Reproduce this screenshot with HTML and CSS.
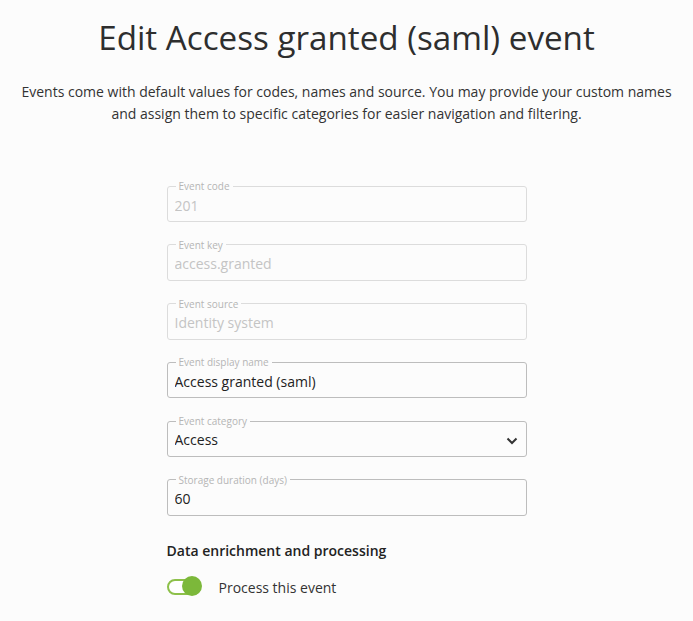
FILE: index.html
```html
<!DOCTYPE html>
<html lang="en">

<head>
    <meta charset="UTF-8">
    <meta name="viewport" content="width=device-width, initial-scale=1.0">
    <title>Edit event</title>
    <link rel="stylesheet" href="styles.css">
</head>

<body>
    <div class="page">
        <h1>Edit Access granted (saml) event</h1>
        <p class="intro">Events come with default values for codes, names and source. You may provide your custom names
            and assign them to specific categories for easier navigation and filtering.</p>

        <form class="event-form">
            <fieldset class="field disabled">
                <legend>Event code</legend>
                <input type="text" value="201" disabled />
            </fieldset>
            <fieldset class="field disabled">
                <legend>Event key</legend>
                <input type="text" value="access.granted" disabled />
            </fieldset>
            <fieldset class="field disabled">
                <legend>Event source</legend>
                <input type="text" value="Identity system" disabled />
            </fieldset>
            <fieldset class="field">
                <legend>Event display name</legend>
                <input type="text" value="Access granted (saml)" />
            </fieldset>
            <fieldset class="field select-field">
                <legend>Event category</legend>
                <select>
                    <option>Access</option>
                    <option>Authentication</option>
                    <option>Other</option>
                </select>
                <svg class="chevron" width="12" height="8" viewBox="0 0 12 8">
                    <path d="M1.5 1.5 L6 6 L10.5 1.5" fill="none" stroke="#333" stroke-width="2" />
                </svg>
            </fieldset>
            <fieldset class="field">
                <legend>Storage duration (days)</legend>
                <input type="text" value="60" />
            </fieldset>

            <div class="processing">
                <h3>Data enrichment and processing</h3>
                <label class="toggle-row">
                    <span class="toggle"><span class="knob"></span></span>
                    <span>Process this event</span>
                </label>
            </div>
        </form>
    </div>
</body>

</html>
```

FILE: styles.css
```css
/* General Styling */
body {
    font-family: "Open Sans", Arial, sans-serif;
    margin: 0;
    padding: 0;
    background: #fcfcfc;
    color: #333;
}

.page {
    display: flex;
    flex-direction: column;
    align-items: center;
    padding-top: 15px;
}

h1 {
    font-size: 33.2px;
    font-weight: 500;
    color: #2e2e2e;
    margin: 0;
    line-height: 46px;
}

.intro {
    width: 670px;
    text-align: center;
    font-size: 14px;
    line-height: 22px;
    color: #333;
    margin: 20px 0 0;
}

/* Form */
.event-form {
    width: 360px;
    display: flex;
    flex-direction: column;
    gap: 16.8px;
    margin-top: 55px;
}

.field {
    margin: 0;
    padding: 0 7px;
    border: 1px solid #bdbdbd;
    border-radius: 3px;
    position: relative;
}

.field legend {
    font-size: 10px;
    line-height: 12px;
    color: #b5b5b5;
    padding: 0 3px;
    margin-left: 1px;
}

.field input,
.field select {
    display: block;
    width: 100%;
    box-sizing: border-box;
    border: none;
    outline: none;
    background: transparent;
    font-family: inherit;
    font-size: 14px;
    line-height: 20px;
    height: 29px;
    padding: 3px 0 6px;
    color: #222;
}

.field select {
    appearance: none;
    -webkit-appearance: none;
    padding-left: 0;
}

.field.disabled {
    border-color: #dcdcdc;
}

.field.disabled input {
    color: #c4c4c4;
}

.chevron {
    position: absolute;
    right: 8px;
    top: 10px;
    pointer-events: none;
}

/* Processing */
.processing {
    margin-top: 8px;
}

.processing h3 {
    font-size: 14px;
    font-weight: 600;
    margin: 0 0 17px;
    line-height: 20px;
    color: #222;
}

.toggle-row {
    display: flex;
    align-items: center;
    gap: 18px;
    font-size: 14px;
    color: #333;
}

.toggle {
    width: 30px;
    height: 12px;
    border: 2px solid #8dc04a;
    border-radius: 8px;
    position: relative;
    background: #fff;
}

.knob {
    position: absolute;
    right: -3px;
    top: -5px;
    width: 20px;
    height: 20px;
    border-radius: 50%;
    background: #7cb83a;
}
```
